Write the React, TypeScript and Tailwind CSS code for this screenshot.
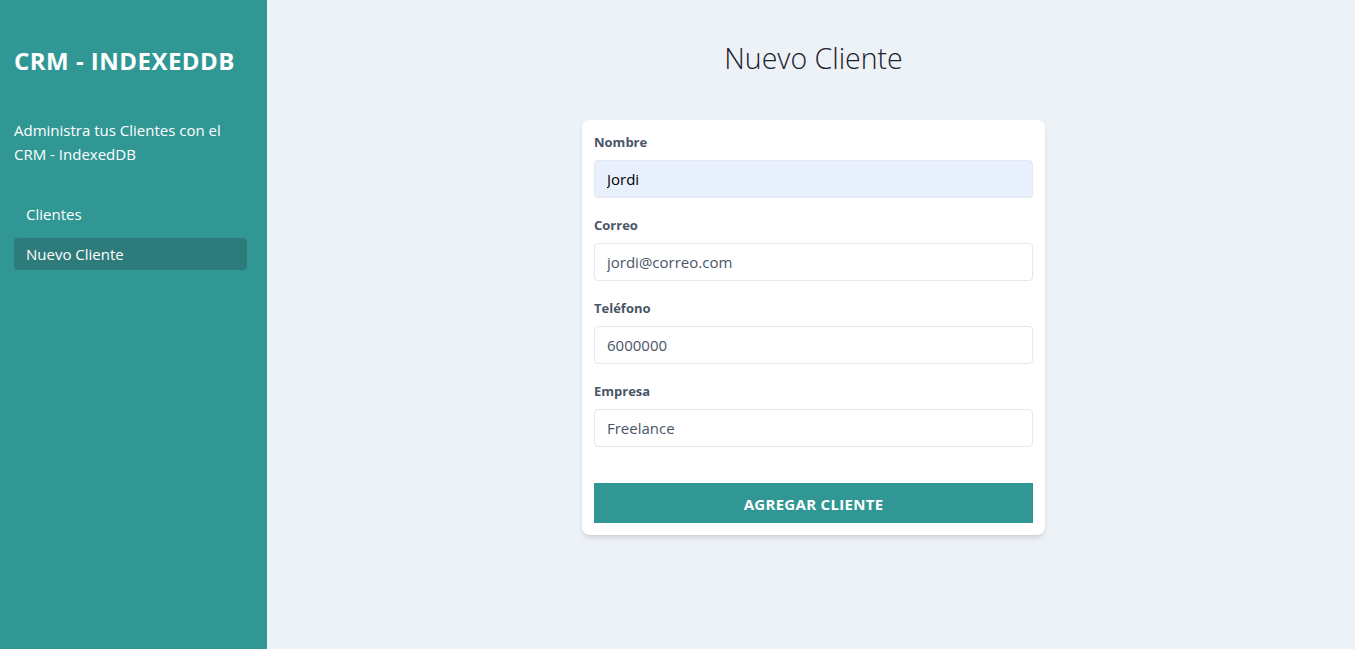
import React from "react";

const fields = [
  { label: "Nombre", value: "Jordi", type: "text", autofill: true },
  { label: "Correo", value: "jordi@correo.com", type: "email" },
  { label: "Teléfono", value: "6000000", type: "tel" },
  { label: "Empresa", value: "Freelance", type: "text" },
];

export default function App() {
  return (
    <div
      className="flex min-h-[649px] w-full"
      style={{ fontFamily: '"Open Sans", "Noto Sans", sans-serif' }}
    >
      {/* Sidebar */}
      <aside className="w-[267px] shrink-0 bg-[#319795] pl-[14px] pr-[20px] pt-[43px] text-white">
        <h1 className="text-[24px] font-bold leading-9 tracking-[0.02em]">CRM - INDEXEDDB</h1>
        <p className="mt-[39px] text-[15px] leading-6">
          Administra tus Clientes con el CRM - IndexedDB
        </p>
        <nav className="mt-[32px] flex flex-col gap-2">
          <a href="#" className="block rounded-sm px-3 py-1 text-[15px] leading-6">
            Clientes
          </a>
          <a href="#" className="block rounded-sm bg-[#2e7b7b] px-3 py-1 text-[15px] leading-6">
            Nuevo Cliente
          </a>
        </nav>
      </aside>

      {/* Main */}
      <main className="flex flex-1 flex-col items-center bg-[#edf2f7] pl-[5px] pt-[40px]">
        <h2 className="text-[28.5px] font-light leading-9 text-[#1a202c]">Nuevo Cliente</h2>

        <form className="mt-[44px] w-[463px] rounded-lg bg-white px-3 pb-3 pt-3 shadow-md">
          {fields.map((f) => (
            <div key={f.label} className="mb-[17px]">
              <label className="mb-2 block text-[13px] font-bold leading-5 text-[#4a5568]">
                {f.label}
              </label>
              <input
                type={f.type}
                defaultValue={f.value}
                className={`h-[38px] w-full rounded border border-[#e2e8f0] px-3 text-[15px] outline-none ${
                  f.autofill ? "bg-[#e8f0fe] text-black" : "bg-white text-[#4a5568]"
                }`}
              />
            </div>
          ))}
          <button
            type="button"
            className="mt-[19px] h-10 w-full bg-[#319795] pt-[2px] text-[15px] font-bold uppercase tracking-[0.02em] text-white"
          >
            Agregar Cliente
          </button>
        </form>
      </main>
    </div>
  );
}
